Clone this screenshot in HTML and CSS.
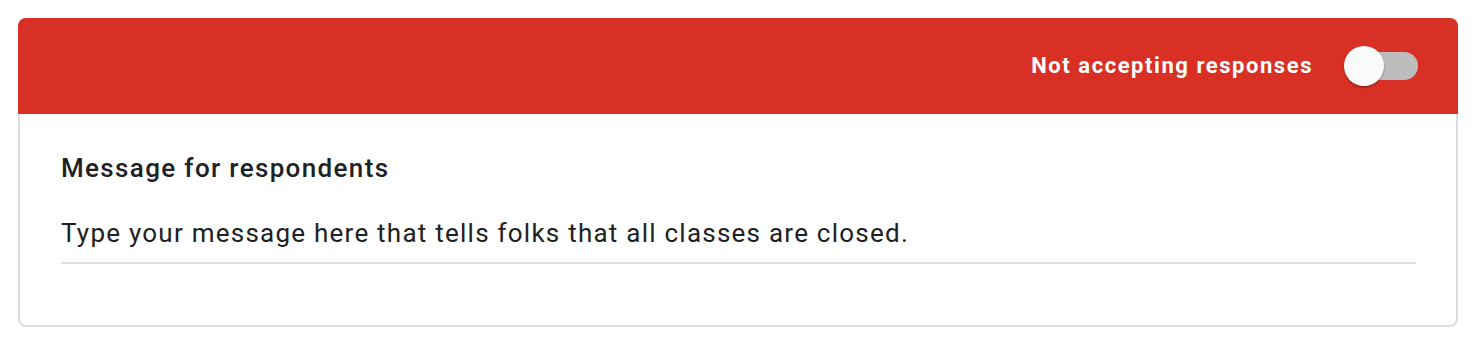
FILE: index.html
```html
<!DOCTYPE html>
<html lang="en">
<head>
<meta charset="utf-8">
<title>Responses</title>
<link rel="stylesheet" href="styles.css">
</head>
<body>
  <div class="card">
    <div class="card-header">
      <span class="status-label">Not accepting responses</span>
      <div class="switch" role="switch" aria-checked="false">
        <div class="switch-track"></div>
        <div class="switch-knob"></div>
      </div>
    </div>
    <div class="card-body">
      <div class="field-title">Message for respondents</div>
      <div class="field-input">Type your message here that tells folks that all classes are closed.</div>
    </div>
  </div>
</body>
</html>
```

FILE: styles.css
```css
html, body {
  margin: 0;
  padding: 0;
  background: #ffffff;
}

body {
  padding: 18px 16px 0 18px;
  font-family: Roboto, "Liberation Sans", Arial, sans-serif;
  color: #202124;
}

.card {
  width: 1440px;
  display: flex;
  flex-direction: column;
}

.card-header {
  height: 96px;
  background: #d93025;
  border-radius: 8px 8px 0 0;
  display: flex;
  align-items: center;
  justify-content: flex-end;
  padding: 0 40px 0 0;
  gap: 31px;
}

.status-label {
  color: #ffffff;
  font-size: 22px;
  line-height: 24px;
  font-weight: 700;
  letter-spacing: 1.55px;
}

.switch {
  position: relative;
  width: 74px;
  height: 40px;
}

.switch-track {
  position: absolute;
  left: 6px;
  top: 6px;
  width: 68px;
  height: 28px;
  border-radius: 14px;
  background: #bdbdbd;
}

.switch-knob {
  position: absolute;
  left: 0;
  top: 0;
  width: 40px;
  height: 40px;
  border-radius: 50%;
  background: #fafafa;
  box-shadow: 0 2px 2px rgba(0, 0, 0, 0.24), 0 0 2px rgba(0, 0, 0, 0.12);
}

.card-body {
  border: 2px solid #dadce0;
  border-top: none;
  border-radius: 0 0 8px 8px;
  padding: 38px 40px 61px 41px;
}

.field-title {
  font-size: 26px;
  line-height: 32px;
  font-weight: 500;
  color: #202124;
  letter-spacing: 1.35px;
}

.field-input {
  margin-top: 33px;
  font-size: 26px;
  line-height: 32px;
  font-weight: 400;
  color: #202124;
  letter-spacing: 1.24px;
  padding-bottom: 13px;
  border-bottom: 2px solid #e0e0e0;
}
```
